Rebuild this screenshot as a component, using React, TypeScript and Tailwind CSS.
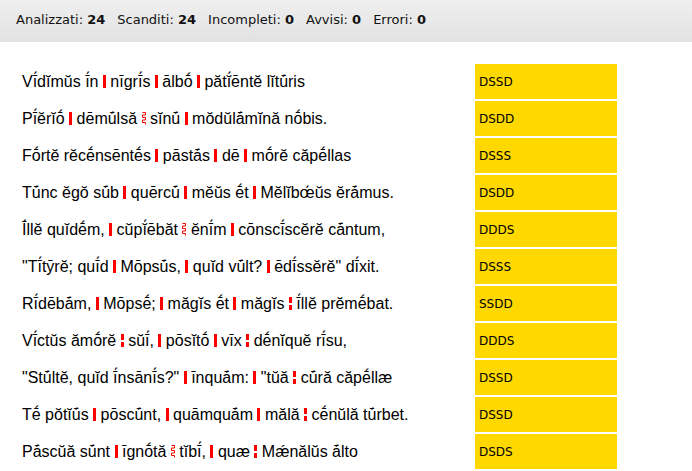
import React from "react";

// | = caesura, ¦ = weak break, ⁞ = uncertain break
const VERSES = [
  { text: "Vī́dĭmŭs ī́n | nīgrī́s | ālbṓ | pătĭ́ēntĕ lĭtū́ris", scan: "DSSD" },
  { text: "Pī́ĕrĭṓ | dēmū́lsă ⁞ sĭnū́ | mŏdŭlā́mĭnă nṓbis.", scan: "DSDD" },
  { text: "Fṓrtĕ rĕcḗnsēntḗs | pāstā́s | dē | mṓrĕ căpḗllas", scan: "DSSS" },
  { text: "Tū́nc ĕgŏ sū́b | quērcū́ | mĕŭs ḗt | Mĕlĭbœ́ŭs ĕrā́mus.", scan: "DSDD" },
  { text: "Ī́llĕ quĭdḗm, | cŭpĭ́ēbăt ⁞ ĕnī́m | cōnscī́scĕrĕ cā́ntum,", scan: "DDDS" },
  { text: "\"Tī́tȳrĕ; quī́d | Mōpsū́s, | quĭd vū́lt? | ēdī́ssĕrĕ\" dī́xit.", scan: "DSSS" },
  { text: "Rī́dēbā́m, | Mōpsḗ; | măgĭs ḗt | măgĭs ¦ ī́llĕ prĕmḗbat.", scan: "SSDD" },
  { text: "Vī́ctŭs ămṓrĕ ¦ sŭī́, | pōsĭtṓ | vīx ¦ dḗnĭquĕ rī́su,", scan: "DDDS" },
  { text: "\"Stū́ltĕ, quĭd ī́nsānī́s?\" | īnquā́m: | \"tŭă ¦ cū́ră căpḗllæ", scan: "DSSD" },
  { text: "Tḗ pŏtĭū́s | pōscū́nt, | quāmquā́m | mălă ¦ cḗnŭlă tū́rbet.", scan: "DSSD" },
  { text: "Pā́scŭă sū́nt | īgnṓtă ⁞ tĭbī́, | quæ ¦ Mǽnălŭs ā́lto", scan: "DSDS" },
];

function Mark({ kind }: { kind: string }) {
  if (kind === "|") {
    return <span className="inline-block h-[13px] w-[3px] bg-[#ff0000] align-[-1px]" />;
  }
  if (kind === "¦") {
    return (
      <svg width="3" height="13" viewBox="0 0 3 13" className="inline-block align-[-1px]">
        <rect x="0" y="0" width="3" height="6" fill="#ff0000" />
        <rect x="0" y="8" width="3" height="5" fill="#ff0000" />
      </svg>
    );
  }
  return (
    <svg width="4" height="13" viewBox="0 0 4 13" className="inline-block align-[-1px]">
      <polyline
        points="0.5,0.5 3.5,0.5 3.5,3 0.5,3 0.5,5.5 3.5,5.5 3.5,8 0.5,8 0.5,10.5 3.5,10.5 3.5,12.5"
        fill="none"
        stroke="#ff0000"
        strokeWidth="1"
      />
    </svg>
  );
}

function Verse({ text }: { text: string }) {
  const parts = text.split(/([|¦⁞])/);
  return (
    <span>
      {parts.map((p, i) =>
        p === "|" || p === "¦" || p === "⁞" ? <Mark key={i} kind={p} /> : <span key={i}>{p}</span>
      )}
    </span>
  );
}

const STATS = [
  ["Analizzati", "24"],
  ["Scanditi", "24"],
  ["Incompleti", "0"],
  ["Avvisi", "0"],
  ["Errori", "0"],
];

export default function App() {
  return (
    <div className="h-[471px] w-[692px] overflow-hidden bg-white">
      <div className="h-[42px] bg-gradient-to-b from-[#efefef] to-[#e2e2e2] pl-[16px] pt-[10px] font-['DejaVu_Sans',sans-serif] text-[13px] text-[#111]">
        <div className="flex gap-[12px] whitespace-pre">
          {STATS.map(([label, n]) => (
            <span key={label}>
              {label}: <b className="font-bold">{n}</b>
            </span>
          ))}
        </div>
      </div>

      <div className="mt-[22px] grid grid-cols-[453px_142px] gap-y-[2px] pl-[22px]">
        {VERSES.map((v) => (
          <React.Fragment key={v.scan + v.text}>
            <div className="flex h-[35px] items-center whitespace-pre font-['Liberation_Sans',Arial,sans-serif] text-[16px] text-black">
              <Verse text={v.text} />
            </div>
            <div className="flex h-[35px] items-center bg-[#ffd800] pl-[4px] font-['DejaVu_Sans',sans-serif] text-[12px] text-black">
              {v.scan}
            </div>
          </React.Fragment>
        ))}
      </div>
    </div>
  );
}
